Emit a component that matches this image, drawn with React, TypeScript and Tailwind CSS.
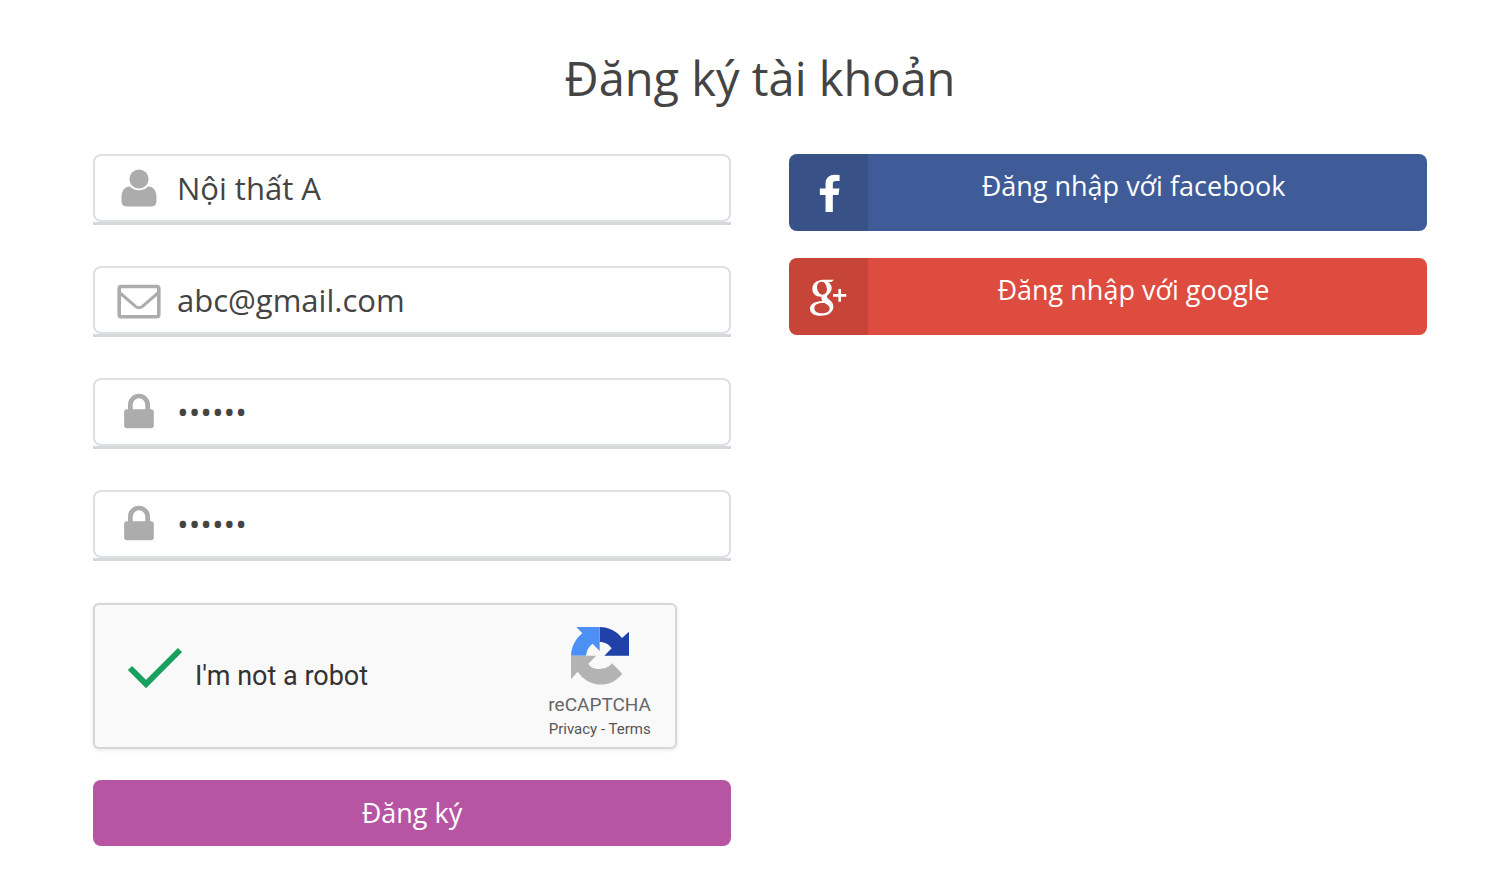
import type { ReactNode } from "react";

type FieldProps = {
  id: string;
  label: string;
  type: string;
  value: string;
  icon: ReactNode;
};

const UserIcon = () => (
  <svg viewBox="0 0 44 44" className="size-11 fill-[#acacac]" aria-hidden="true">
    <circle cx="22" cy="13" r="9.600" />
    <path d="M13.200 20.500C15.200 23 18.200 24.300 22 24.300s6.800-1.300 8.800-3.800C36.700 20.500 39.500 25 39.500 31.500V35.500c0 3.200-1.800 4.900-5 4.900H9.500c-3.200 0-5-1.700-5-4.900V31.500C4.500 25 7.300 20.500 13.200 20.500z" />
  </svg>
);

const MailIcon = () => (
  <svg viewBox="0 0 44 44" className="size-11 fill-none stroke-[#acacac]" strokeWidth="3.600" strokeLinejoin="round" aria-hidden="true">
    <rect x="2.200" y="8.500" width="39.600" height="30.300" rx="2" />
    <path d="M2.500 14.500L18.500 28.300c2.600 2.100 4.400 2.100 7 0L41.500 14.500" strokeWidth="3" />
  </svg>
);

const LockIcon = () => (
  <svg viewBox="0 -20 1792 1792" className="size-11 fill-[#acacac]" aria-hidden="true">
    <path d="M640 768h512v-192q0-106-75-181t-181-75-181 75-75 181v192zm860 96v576q0 40-28 68t-68 28h-1016q-40 0-68-28t-28-68v-576q0-40 28-68t68-28h60v-192q0-184 132-316t316-132 316 132 132 316v192h60q40 0 68 28t28 68z" />
  </svg>
);

const FacebookIcon = () => (
  <svg viewBox="0 -80 1792 1792" className="size-10 fill-white" aria-hidden="true">
    <path d="M1370 12v264h-157q-86 0-116 36t-30 108v189h293l-39 296h-254v759h-326v-759h-255v-296h255v-218q0-186 114-288.500t287-102.500q147 0 228 12z" />
  </svg>
);

const GooglePlusIcon = () => (
  <svg viewBox="0 0 150 162" className="h-[54px] w-[50px] fill-white" aria-hidden="true">
    <path
      fillRule="evenodd"
      d="M58 29H90L82 36H72C80 41 83 47 83 54C83 64 77 70 71 75C67 79 68 82 73 86C82 93 88 99 88 110C88 127 72 137 50 137C30 137 18 129 18 116C18 101 33 94 56 93C52 89 51 85 53 80C36 81 25 71 25 56C25 40 39 29 58 29ZM52 35C43 36 39 42 39 51C40 64 46 74 56 74C65 73 69 67 69 58C68 45 62 34 52 35ZM58 99C40 99 31 104 31 114C31 124 40 130 54 130C68 130 77 124 77 115C77 108 70 104 62 99Z"
    />
    <path d="M103 57h8v15h16v8h-16v15h-8v-15h-16v-8h16z" />
  </svg>
);

const RecaptchaLogo = () => (
  <svg viewBox="32 33 174 174" className="size-[58px]" aria-hidden="true">
    <path fill="#1f41a8" d="M118 33C146 34 168 45 185 66L206 47V119H132L154 97C146 85 134 78 118 78Z" />
    <path fill="#4c8ff5" d="M48 33H118V105L97 83C85 91 79 103 77 119H32C33 92 45 69 66 52Z" />
    <path fill="#b3b3b3" d="M32 119H108L84 143C93 163 138 166 155 142L186 173C150 219 86 216 52 167L32 190Z" />
  </svg>
);

function Field({ id, label, type, value, icon }: FieldProps) {
  return (
    <div className="border-b-[3px] border-[#d6d8d9]">
      <div className="flex h-[68px] items-center rounded-lg border-2 border-[#dce0e4] bg-white pl-[22px]">
        <label htmlFor={id} className="shrink-0">
          {icon}
        </label>
        <input
          id={id}
          type={type}
          aria-label={label}
          defaultValue={value}
          className="h-full min-w-0 flex-1 bg-transparent pr-4 pl-4 text-[31px] text-[#444] outline-none"
        />
      </div>
    </div>
  );
}

function SocialButton({ className, icon, children }: { className: string; icon: ReactNode; children: ReactNode }) {
  return (
    <button type="button" className={`flex h-[77px] w-full overflow-hidden rounded-lg text-[27px] text-white ${className}`}>
      <span className="flex h-full w-[79px] shrink-0 items-center justify-center bg-black/10">{icon}</span>
      <span className="flex-1 pt-3 pr-7 text-center leading-10">{children}</span>
    </button>
  );
}

export default function App() {
  return (
    <main className="min-h-screen bg-white pt-12 pr-[73px] pb-6 pl-[93px] font-['Open_Sans',sans-serif]">
      <h1 className="text-center text-[47px] leading-[60px] text-[#444]">Đăng ký tài khoản</h1>
      <div className="mt-[46px] grid grid-cols-2 gap-x-[58px]">
        <form onSubmit={(e) => e.preventDefault()}>
          <div className="flex flex-col gap-[41px]">
            <Field id="name" label="Tên" type="text" value="Nội thất A" icon={<UserIcon />} />
            <Field id="email" label="Email" type="email" value="abc@gmail.com" icon={<MailIcon />} />
            <Field id="password" label="Mật khẩu" type="password" value="123456" icon={<LockIcon />} />
            <Field id="confirm" label="Nhập lại mật khẩu" type="password" value="123456" icon={<LockIcon />} />
          </div>
          <div className="mt-[42px] flex h-[146px] max-w-[584px] items-center justify-between rounded-md border-2 border-[#d6d6d6] bg-[#f9f9f9] pr-6 pl-8 font-[Roboto,sans-serif] shadow-[0_1px_4px_rgba(0,0,0,0.1)]">
            <label className="relative flex items-center gap-3 text-[27px] text-[#333]">
              <input type="checkbox" defaultChecked className="absolute size-14 appearance-none" />
              <svg viewBox="0 0 56 60" className="h-[60px] w-14 fill-none stroke-[#18a05e]" strokeWidth="6" aria-hidden="true">
                <path d="M3 22l16 16L53 4" />
              </svg>
              I'm not a robot
            </label>
            <div className="flex flex-col items-center pt-4 text-[#666]">
              <RecaptchaLogo />
              <span className="mt-2 text-[19px] leading-6">reCAPTCHA</span>
              <span className="text-[15px] leading-6 text-[#555]">
                <a href="#privacy">Privacy</a> - <a href="#terms">Terms</a>
              </span>
            </div>
          </div>
          <button type="submit" className="mt-[31px] h-[66px] w-full rounded-lg bg-[#b755a3] text-[27px] text-white">
            Đăng ký
          </button>
        </form>
        <div className="flex flex-col gap-[27px]">
          <SocialButton className="bg-[#3f5c98]" icon={<FacebookIcon />}>Đăng nhập với facebook</SocialButton>
          <SocialButton className="bg-[#de4c3f]" icon={<GooglePlusIcon />}>Đăng nhập với google</SocialButton>
        </div>
      </div>
    </main>
  );
}
